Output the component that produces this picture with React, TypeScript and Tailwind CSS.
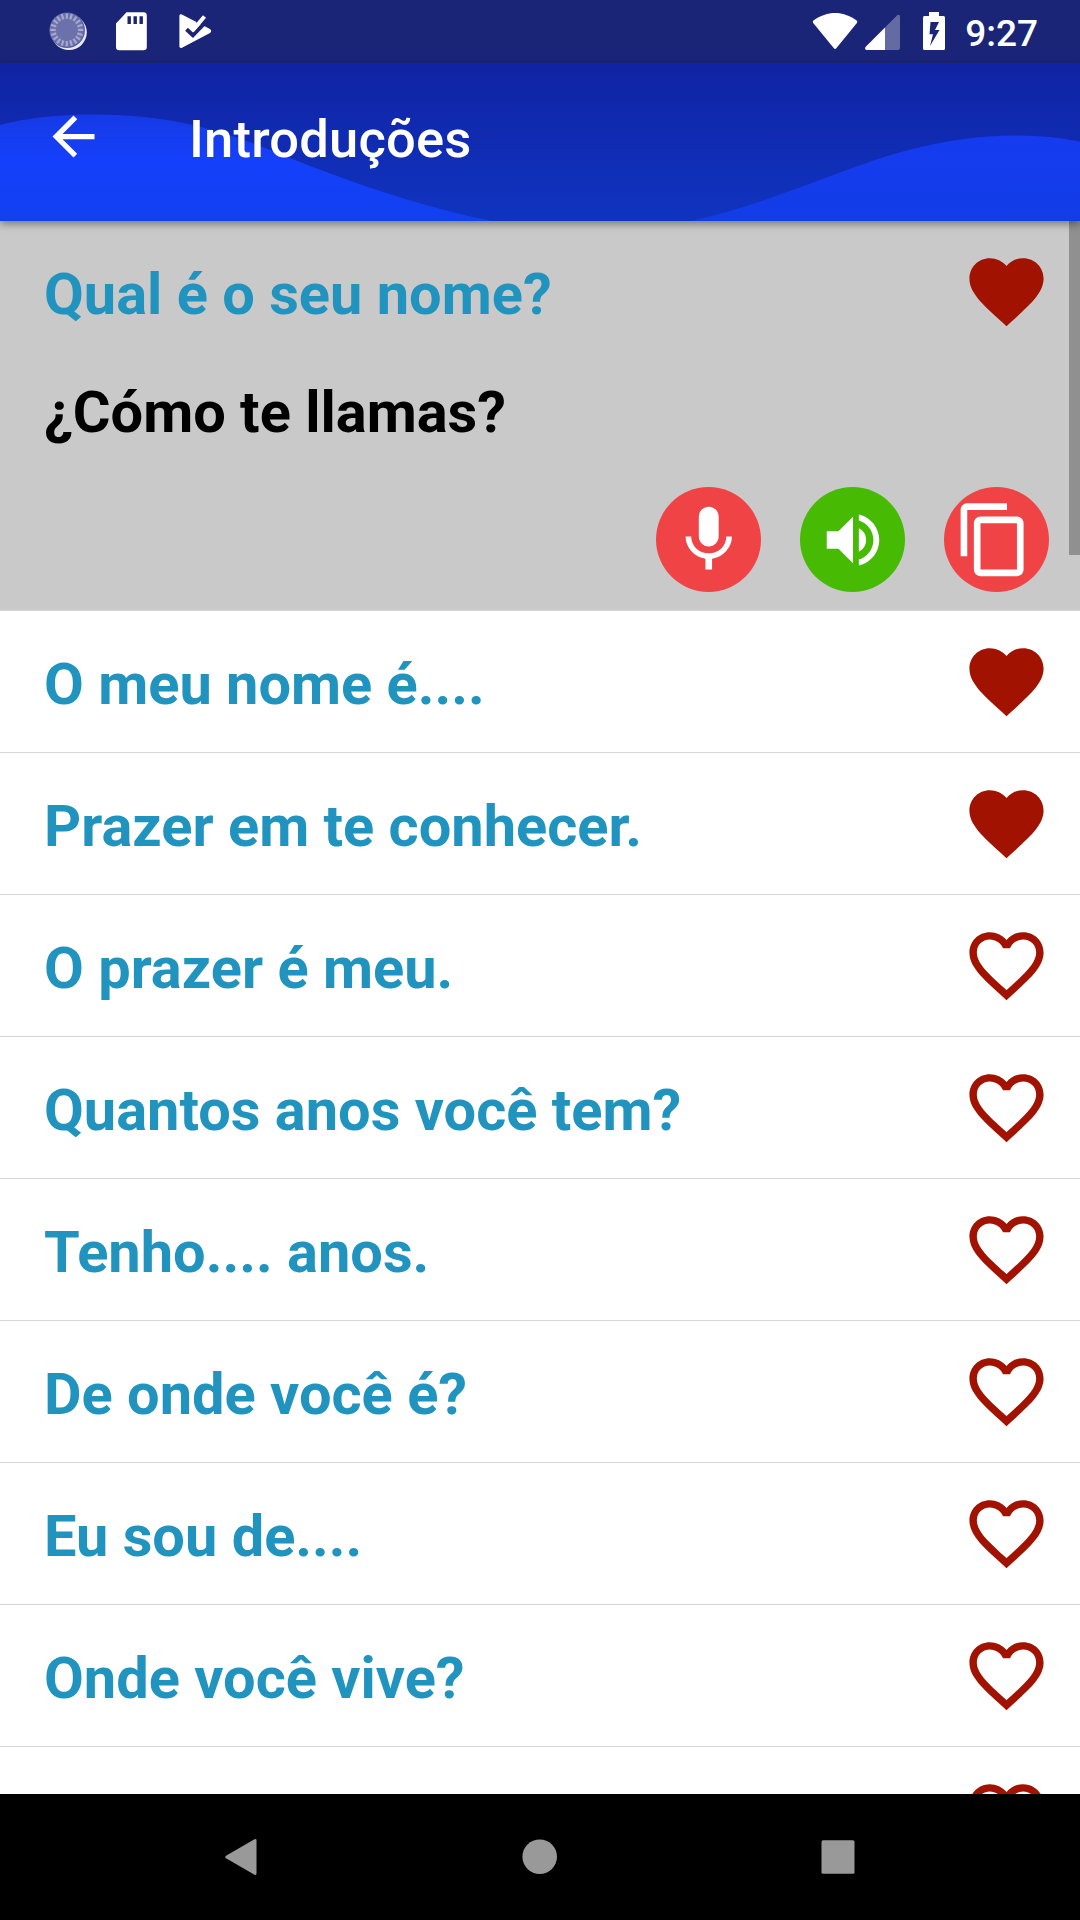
import clsx from "clsx"
import { MdArrowBack, MdContentCopy, MdFavorite, MdFavoriteBorder, MdVolumeUp } from "react-icons/md"

const phrases = [
  { text: 'Qual é o seu nome?', translation: '¿Cómo te llamas?', favorite: true },
  { text: 'O meu nome é....', favorite: true },
  { text: 'Prazer em te conhecer.', favorite: true },
  { text: 'O prazer é meu.', favorite: false },
  { text: 'Quantos anos você tem?', favorite: false },
  { text: 'Tenho.... anos.', favorite: false },
  { text: 'De onde você é?', favorite: false },
  { text: 'Eu sou de....', favorite: false },
  { text: 'Onde você vive?', favorite: false },
  { text: '', favorite: false }
]

const ticks = Array.from({ length: 20 }, (_, i) => i * 18)

const StatusBar = () => (
  <div className="h-[63px] shrink-0 bg-[#1b2577] text-white flex items-center justify-between">
    <svg width="230" height="63" viewBox="0 0 230 63">
      {/* Sync spinner */}
      <circle cx="69" cy="32.3" r="17.8" fill="#fff" fillOpacity=".9" />
      <circle cx="67.2" cy="30.2" r="17.8" fill="#5b60a0" />
      <circle cx="66.8" cy="29.9" r="17" fill="#6d71ab" />
      {ticks.map((angle) => (
        <path key={angle} d="M66.8 13.4v5.4" stroke="#a6a9ce" strokeWidth="2.2" transform={`rotate(${angle} 66.8 29.9)`} />
      ))}
      {/* SD card */}
      <path
        fillRule="evenodd"
        fill="#fff"
        d="M126.5 12.3H143.5a3.3 3.3 0 0 1 3.3 3.3V47a3.3 3.3 0 0 1-3.3 3.3H119.3a3.3 3.3 0 0 1-3.3-3.3V23.5zM127.5 16.3v7.7h3.4v-7.7zM133.5 16.3v7.7h3.4v-7.7zM139.5 16.3v7.7h3.4v-7.7z"
      />
      {/* Play Protect */}
      <path d="M179.4 16c0-1.6 1.2-2.1 2.5-1.4L210 29c1.6 1 1.6 3 0 4L182 47.7c-1.4.7-2.6 0-2.6-1.4z" fill="#fff" />
      <path d="M196 23L204 14l9 1v12l-7.5-1.5z" fill="#1b2577" />
      <path d="M186.5 29.3l6.4 6L206.5 21" fill="none" stroke="#1b2577" strokeWidth="4" />
      <path d="M190.5 26.8l3 2.7L204.5 16.5" fill="none" stroke="#fff" strokeWidth="4" />
    </svg>
    <div className="flex items-center pr-[42px]">
      <svg width="153" height="63" viewBox="810 0 153 63">
        {/* Wifi */}
        <path d="M813.5 20.5C820 15.5 828 13 835.1 13s15 2.5 21.5 7.5q1.3 1.2.3 2.6L836.3 48.3q-1.2 1.2-2.4 0L813.2 23.1q-1-1.4.3-2.6z" fill="#fff" />
        {/* Mobile signal */}
        <path d="M885 27.5L897.5 15q2.5-1 2.5 1.5V48q0 2-2 2H885z" fill="#fff" fillOpacity=".32" />
        <path d="M885 27.5V50H867q-3-.5-1.5-3z" fill="#fff" />
        {/* Battery charging */}
        <path
          fillRule="evenodd"
          fill="#fff"
          d="M929 12h10v4h4.5q1.5 0 1.5 1.5v31q0 1.500-1.500 1.500h-19q-1.500 0-1.500-1.500v-31q0-1.500 1.500-1.500h4.500zM930.500 22l-1 12.300h3.500L930 46l9.500-16h-4.500l4-8z"
        />
      </svg>
      <span className="text-[37px] leading-[63px] pl-[2px] pt-[4px] font-medium">9:27</span>
    </div>
  </div>
)

const Header = () => (
  <header className="relative z-10 h-[158px] shrink-0 shadow-[0_3px_8px_rgba(0,0,0,0.4)]">
    <svg className="absolute inset-0" width="1080" height="158" viewBox="0 63 1080 158">
      <defs>
        <linearGradient id="sky" x1="0" y1="0" x2="0" y2="1">
          <stop offset="0" stopColor="#1023a4" />
          <stop offset="1" stopColor="#1034c0" />
        </linearGradient>
        <linearGradient id="waveLeft" x1="0" y1="0" x2="0" y2="1">
          <stop offset="0" stopColor="#163ae6" />
          <stop offset="0.45" stopColor="#1540fb" />
          <stop offset="1" stopColor="#1240ee" />
        </linearGradient>
        <linearGradient id="waveRight" x1="0" y1="0" x2="0" y2="1">
          <stop offset="0" stopColor="#163bf0" />
          <stop offset="1" stopColor="#123de6" />
        </linearGradient>
      </defs>
      <path d="M0 63h1080v158H0z" fill="url(#sky)" />
      <path d="M0 125C30 117 62 114.5 95 114.5C190 114.5 245 140 300 162S430 209 492 221H0z" fill="url(#waveLeft)" />
      <path d="M691 221C745 209 790 191 836 174S940 135.5 1018 135.5Q1050 135.5 1080 141.7V221z" fill="url(#waveRight)" />
    </svg>
    <div className="relative h-full flex items-center pl-[42px] text-white">
      <MdArrowBack className="w-[63px] h-[63px] mt-[-11px]" />
      <h1 className="pl-[84px] mt-[-6px] text-[52.5px] leading-[62px] tracking-[0.2px] font-medium">Introduções</h1>
    </div>
  </header>
)

const Actions = () => (
  <div className="flex justify-end gap-[39px] pr-[31px] text-white">
    <button className="w-[105px] h-[105px] rounded-full bg-[#f04346] flex items-center justify-center">
      <svg className="w-[79.5px] h-[79.5px]" viewBox="0 0 24 24" fill="currentColor">
        <path d="M12 14c1.66 0 2.99-1.34 2.99-3L15 5c0-1.66-1.34-3-3-3S9 3.34 9 5v6c0 1.66 1.34 3 3 3zm5.3-3c0 3-2.54 5.1-5.3 5.1S6.7 14 6.7 11H5c0 3.41 2.72 6.23 6 6.72V21h2v-3.28c3.28-.48 6-3.3 6-6.72h-1.7z" />
      </svg>
    </button>
    <button className="w-[105px] h-[105px] rounded-full bg-[#47ba04] flex items-center justify-center">
      <MdVolumeUp className="w-[70px] h-[70px]" />
    </button>
    <button className="w-[105px] h-[105px] rounded-full bg-[#f04346] flex items-center justify-center pr-[5px]">
      <MdContentCopy className="w-[79.5px] h-[79.5px]" />
    </button>
  </div>
)

const PhraseList = () => (
  <main className="relative flex-1 min-h-0 overflow-hidden bg-white">
    {phrases.map((p, i) => (
      <div key={i} className={clsx('border-b border-[#d7d7d7]', p.translation ? 'h-[390px] bg-[#c9c9c9]' : 'h-[142px]')}>
        <div className="h-[141px] pl-[44px] pr-[29px] flex items-start justify-between">
          <span className="pt-[38px] text-[57.75px] leading-[70px] font-bold text-[#2093bf]">{p.text}</span>
          {p.favorite
            ? <MdFavorite className="w-[89px] h-[89px] mt-[26px] text-[#a11200]" />
            : <MdFavoriteBorder className="w-[89px] h-[89px] mt-[26px] text-[#a11200]" />}
        </div>
        {p.translation && (
          <>
            <div className="h-[125px] pl-[44px] pt-[15px] text-[57.75px] leading-[70px] font-bold text-black">{p.translation}</div>
            <Actions />
          </>
        )}
      </div>
    ))}
    {/* Scrollbar thumb */}
    <div className="absolute top-0 right-0 w-[11px] h-[334px] bg-[#909090]" />
  </main>
)

const NavBar = () => (
  <nav className="h-[126px] shrink-0 bg-black flex items-center justify-center">
    <svg width="640" height="40" viewBox="220 1837 640 40" fill="#999">
      <path d="M254.5 1839.3q2-.8 2 1.2v33q0 2-2 1.2L226 1858.3q-1.6-1.3 0-2.6z" />
      <circle cx="539.7" cy="1856.7" r="17.3" />
      <rect x="821.5" y="1840.3" width="33" height="33.5" rx="1.5" />
    </svg>
  </nav>
)

const App = () => (
  <div className="w-[1080px] h-[1920px] flex flex-col overflow-hidden font-['Roboto',sans-serif]">
    <StatusBar />
    <Header />
    <PhraseList />
    <NavBar />
  </div>
)

export default App
